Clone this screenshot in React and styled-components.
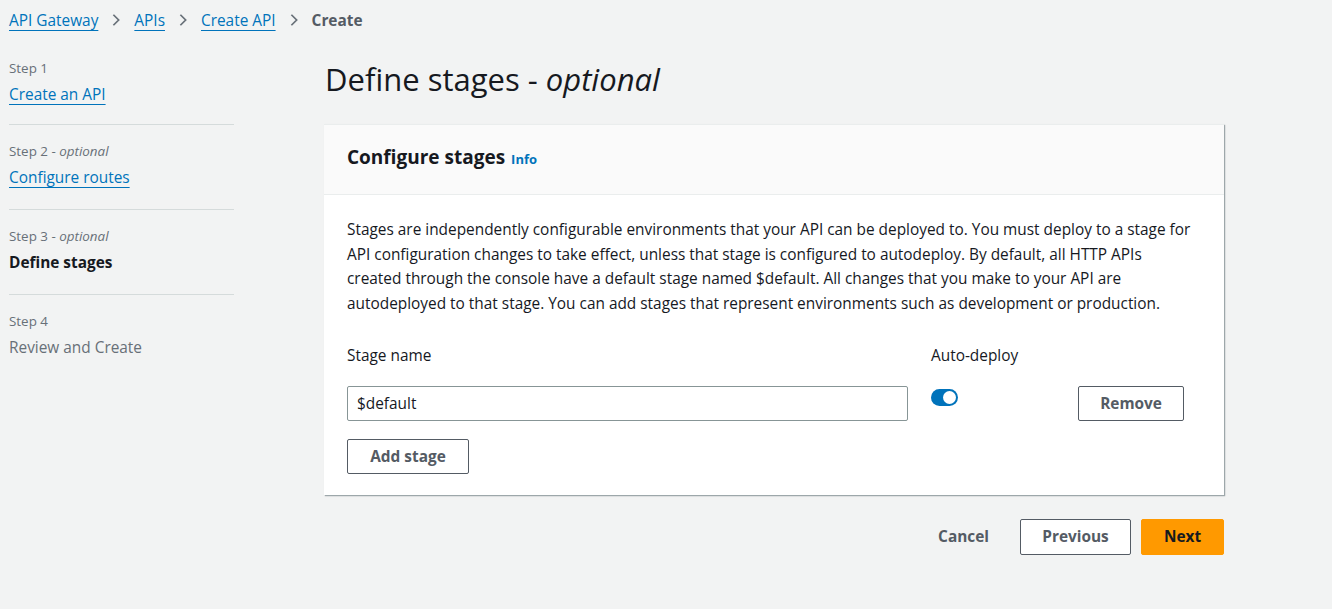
import React, { useState } from 'react'
import styled, { createGlobalStyle } from 'styled-components'

const GlobalStyle = createGlobalStyle`
  html, body {
    margin: 0;
    padding: 0;
    background: #f2f3f3;
    font-family: "Open Sans", "Noto Sans", sans-serif;
    color: #16191f;
  }
`

const Page = styled.div`
  min-height: 609px;
  padding: 7px 0 0 9px;
  box-sizing: border-box;
`

const Breadcrumbs = styled.nav`
  display: flex;
  align-items: center;
  gap: 11px;
  height: 26px;
  font-size: 15.4px;
`

const Crumb = styled.a`
  color: ${(p) => (p.$current ? '#545b64' : '#0073bb')};
  font-weight: ${(p) => (p.$current ? 700 : 400)};
  text-decoration: ${(p) => (p.$current ? 'none' : 'underline')};
  text-underline-offset: 4px;
`

const Chevron = () => (
  <svg width="14" height="14" viewBox="0 0 16 16" fill="none">
    <path d="M5 2l6 6-6 6" stroke="#687078" strokeWidth="2" />
  </svg>
)

const Layout = styled.div`
  display: grid;
  grid-template-columns: 225px 900px;
  column-gap: 90px;
  margin-top: 8px;
`

const Steps = styled.ul`
  list-style: none;
  margin: 0;
  padding: 0;
`

const StepItem = styled.li`
  padding: ${(p) => (p.$first ? '17px' : '16px')} 0 ${(p) => (p.$first ? '18px' : '20px')};
  border-top: ${(p) => (p.$first ? 'none' : '1px solid #d5dbdb')};
`

const StepLabel = styled.div`
  font-size: 13.4px;
  color: #687078;
  line-height: 20px;
  em {
    font-style: italic;
  }
`

const StepTitle = styled.div`
  margin-top: 6px;
  font-size: 15.4px;
  line-height: 22px;
  color: ${(p) => (p.$state === 'link' ? '#0073bb' : p.$state === 'active' ? '#16191f' : '#687078')};
  font-weight: ${(p) => (p.$state === 'active' ? 700 : 400)};
  text-decoration: ${(p) => (p.$state === 'link' ? 'underline' : 'none')};
  text-underline-offset: 4px;
`

const Main = styled.main`
  display: flex;
  flex-direction: column;
`

const Title = styled.h1`
  margin: 18px 0 25px 1px;
  font-size: 31px;
  font-weight: 400;
  line-height: 40px;
  em {
    font-style: italic;
  }
`

const Card = styled.section`
  background: #fff;
  box-shadow: 1px 1px 1px 0 rgba(0, 28, 36, 0.3), 1px 1px 2px 0 rgba(0, 28, 36, 0.1);
  border-top: 1px solid #eaeded;
`

const CardHeader = styled.header`
  display: flex;
  align-items: baseline;
  gap: 6px;
  height: 70px;
  box-sizing: border-box;
  padding: 18px 23px 0;
  background: #fafafa;
  border-bottom: 1px solid #eaeded;
`

const CardTitle = styled.h2`
  margin: 0;
  font-size: 19px;
  font-weight: 700;
  line-height: 28px;
`

const InfoLink = styled.a`
  font-size: 13px;
  font-weight: 700;
  color: #0073bb;
`

const CardBody = styled.div`
  padding: 23px 23px 21px;
`

const Description = styled.p`
  margin: 0;
  font-size: 15.4px;
  line-height: 24.7px;
`

const StageGrid = styled.div`
  display: grid;
  grid-template-columns: 561px 124px 106px;
  column-gap: 23px;
  row-gap: 18px;
  align-items: start;
  margin-top: 28px;
`

const Label = styled.label`
  font-size: 15.4px;
  line-height: 22px;
  margin-bottom: 1px;
`

const Input = styled.input`
  height: 35px;
  box-sizing: border-box;
  border: 1px solid #879596;
  border-radius: 2px;
  padding: 0 9px;
  font-family: inherit;
  font-size: 15.4px;
  color: #16191f;
  width: 100%;
`

const Toggle = styled.button`
  width: 27px;
  height: 17px;
  margin-top: 3px;
  border: none;
  border-radius: 9px;
  padding: 0;
  background: ${(p) => (p.$on ? '#0073bb' : '#aab7b8')};
  position: relative;
  cursor: pointer;
  &::after {
    content: '';
    position: absolute;
    top: 2px;
    left: ${(p) => (p.$on ? '12px' : '2px')};
    width: 13px;
    height: 13px;
    border-radius: 50%;
    background: #fff;
  }
`

const Button = styled.button`
  height: ${(p) => (p.$tall ? '36px' : '35px')};
  box-sizing: border-box;
  padding: 0 20px;
  border-radius: 2px;
  font-family: inherit;
  font-size: 15.4px;
  font-weight: 700;
  cursor: pointer;
  border: 1px solid ${(p) => (p.$variant === 'primary' ? '#ff9900' : p.$variant === 'link' ? 'transparent' : '#545b64')};
  background: ${(p) => (p.$variant === 'primary' ? '#ff9900' : p.$variant === 'link' ? 'transparent' : '#fff')};
  color: ${(p) => (p.$variant === 'primary' ? '#16191f' : '#545b64')};
  width: ${(p) => p.$width || 'auto'};
`

const Footer = styled.div`
  display: flex;
  justify-content: flex-end;
  align-items: center;
  gap: 10px;
  margin-top: 24px;
`

export default function App() {
  const [autoDeploy, setAutoDeploy] = useState(true)
  const [stage, setStage] = useState('$default')

  return (
    <>
      <GlobalStyle />
      <Page>
        <Breadcrumbs>
          <Crumb>API Gateway</Crumb>
          <Chevron />
          <Crumb>APIs</Crumb>
          <Chevron />
          <Crumb>Create API</Crumb>
          <Chevron />
          <Crumb $current>Create</Crumb>
        </Breadcrumbs>
        <Layout>
          <Steps>
            <StepItem $first>
              <StepLabel>Step 1</StepLabel>
              <StepTitle $state="link">Create an API</StepTitle>
            </StepItem>
            <StepItem>
              <StepLabel>Step 2 - <em>optional</em></StepLabel>
              <StepTitle $state="link">Configure routes</StepTitle>
            </StepItem>
            <StepItem>
              <StepLabel>Step 3 - <em>optional</em></StepLabel>
              <StepTitle $state="active">Define stages</StepTitle>
            </StepItem>
            <StepItem>
              <StepLabel>Step 4</StepLabel>
              <StepTitle>Review and Create</StepTitle>
            </StepItem>
          </Steps>
          <Main>
            <Title>Define stages - <em>optional</em></Title>
            <Card>
              <CardHeader>
                <CardTitle>Configure stages</CardTitle>
                <InfoLink>Info</InfoLink>
              </CardHeader>
              <CardBody>
                <Description>
                  Stages are independently configurable environments that your API can be deployed to. You must deploy to a stage for<br />
                  API configuration changes to take effect, unless that stage is configured to autodeploy. By default, all HTTP APIs<br />
                  created through the console have a default stage named $default. All changes that you make to your API are<br />
                  autodeployed to that stage. You can add stages that represent environments such as development or production.
                </Description>
                <StageGrid>
                  <Label>Stage name</Label>
                  <Label>Auto-deploy</Label>
                  <span />
                  <Input value={stage} onChange={(e) => setStage(e.target.value)} />
                  <Toggle $on={autoDeploy} onClick={() => setAutoDeploy(!autoDeploy)} />
                  <Button $width="106px">Remove</Button>
                  <Button $width="122px">Add stage</Button>
                </StageGrid>
              </CardBody>
            </Card>
            <Footer>
              <Button $variant="link" $tall>Cancel</Button>
              <Button $tall $width="111px">Previous</Button>
              <Button $variant="primary" $tall $width="83px">Next</Button>
            </Footer>
          </Main>
        </Layout>
      </Page>
    </>
  )
}
